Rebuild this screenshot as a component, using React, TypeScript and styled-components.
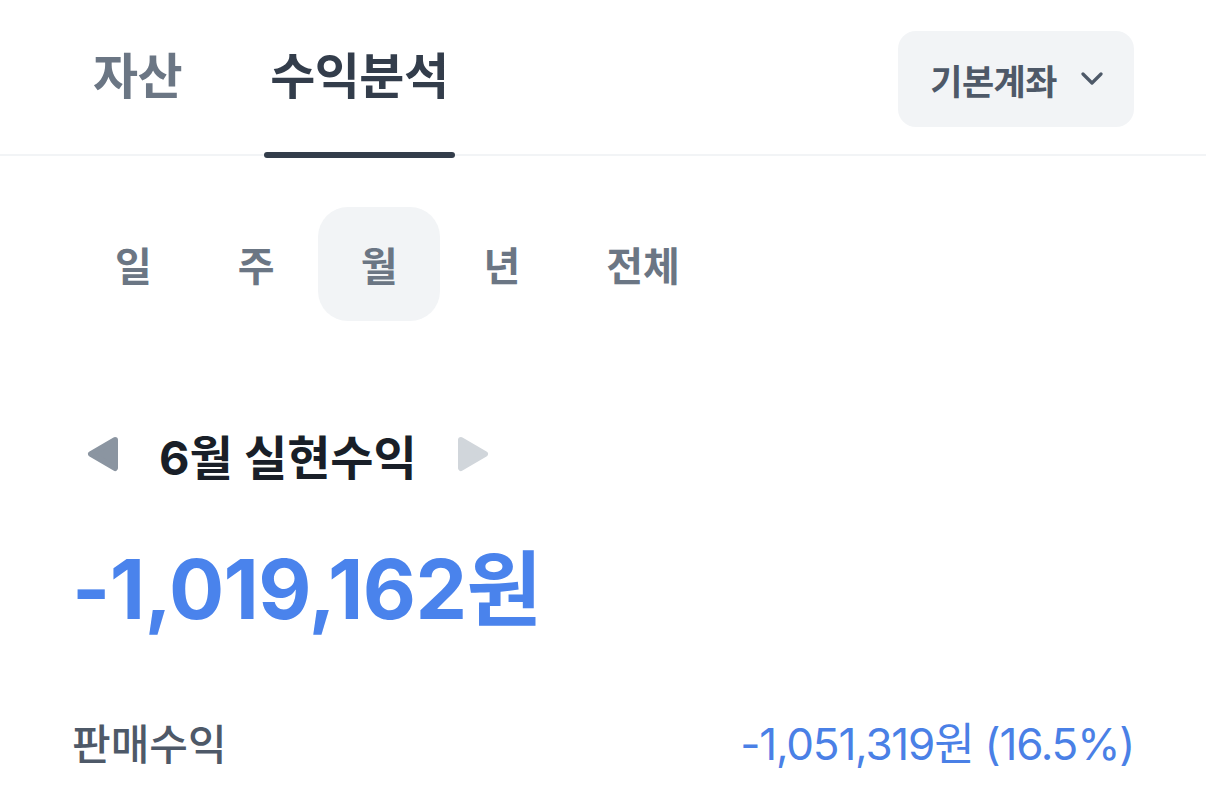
import React, { useState } from 'react';
import styled, { createGlobalStyle } from 'styled-components';

const GlobalStyle = createGlobalStyle`
    html, body {
        margin: 0;
        padding: 0;
        background: #ffffff;
    }

    body {
        font-family: Inter, 'Noto Sans CJK KR', 'Noto Sans', sans-serif;
        -webkit-font-smoothing: antialiased;
    }
`;

const Page = styled.div`
    width: 1206px;
    height: 810px;
    overflow: hidden;
    background: #ffffff;
`;

const Header = styled.header`
    display: flex;
    align-items: center;
    justify-content: space-between;
    height: 156px;
    padding: 0 72px 0 87px;
    box-sizing: border-box;
    border-bottom: 2px solid #f2f4f6;
`;

const TabList = styled.nav`
    display: flex;
    align-self: stretch;
    gap: 76px;
`;

const Tab = styled.button<{ $active?: boolean }>`
    position: relative;
    display: flex;
    align-items: center;
    padding: 0 6px 10px;
    border: 0;
    background: none;
    font-family: inherit;
    font-size: 49px;
    font-weight: 700;
    letter-spacing: -0.5px;
    color: ${({ $active }) => ($active ? '#333d4b' : '#6b7684')};
    cursor: pointer;

    &::after {
        content: '';
        display: ${({ $active }) => ($active ? 'block' : 'none')};
        position: absolute;
        left: 0;
        right: 0;
        bottom: -4px;
        height: 6px;
        border-radius: 3px;
        background: #333d4b;
    }
`;

const AccountButton = styled.button`
    display: flex;
    align-items: center;
    gap: 24px;
    height: 96px;
    padding: 0 31px 0 32px;
    border: 0;
    border-radius: 18px;
    background: #f2f4f6;
    font-family: inherit;
    font-size: 35px;
    font-weight: 700;
    letter-spacing: -0.5px;
    color: #4e5968;
    margin-top: 4px;
`;

const Body = styled.main`
    padding: 51px 72px 0;
`;

const PeriodRow = styled.div`
    display: flex;
`;

const PeriodItem = styled.button<{ $active?: boolean }>`
    height: 114px;
    padding: 0 43px;
    border: 0;
    border-radius: 30px;
    background: ${({ $active }) => ($active ? '#f2f4f6' : 'transparent')};
    font-family: inherit;
    font-size: 40px;
    font-weight: 600;
    color: #6b7684;
    cursor: pointer;
`;

const TitleRow = styled.div`
    display: flex;
    align-items: center;
    gap: 40px;
    margin: 100px 0 0 14px;
    height: 66px;
`;

const Title = styled.h2`
    margin: 0;
    font-size: 47px;
    font-weight: 700;
    letter-spacing: 0;
    color: #191f28;
`;

const Amount = styled.div`
    margin-top: 62px;
    font-size: 82px;
    font-weight: 700;
    letter-spacing: -0.6px;
    line-height: 1;
    color: #4a83ec;
`;

const SummaryRow = styled.div`
    display: flex;
    align-items: center;
    justify-content: space-between;
    margin-top: 78px;
`;

const SummaryLabel = styled.span`
    font-size: 42px;
    font-weight: 500;
    color: #4e5968;
`;

const SummaryValue = styled.span`
    font-size: 44px;
    font-weight: 400;
    letter-spacing: -1.2px;
    color: #4a80e6;
`;

const Arrow = ({ dir, color }: { dir: 'left' | 'right'; color: string }) => (
    <svg width="33" height="36" viewBox="0 0 33 36">
        <path
            d={dir === 'left' ? 'M29 4 L5 18 L29 32 Z' : 'M4 4 L28 18 L4 32 Z'}
            fill={color}
            stroke={color}
            strokeWidth="6"
            strokeLinejoin="round"
        />
    </svg>
);

const Chevron = () => (
    <svg width="22" height="14" viewBox="0 0 22 14">
        <path d="M2 2 L11 11 L20 2" fill="none" stroke="#4e5968" strokeWidth="3.2" strokeLinecap="round" strokeLinejoin="round" />
    </svg>
);

const periods = ['일', '주', '월', '년', '전체'];

export default function App() {
    const [period, setPeriod] = useState('월');

    return (
        <Page>
            <GlobalStyle />
            <Header>
                <TabList>
                    <Tab>자산</Tab>
                    <Tab $active>수익분석</Tab>
                </TabList>
                <AccountButton>
                    기본계좌
                    <Chevron />
                </AccountButton>
            </Header>
            <Body>
                <PeriodRow>
                    {periods.map((p) => (
                        <PeriodItem key={p} $active={p === period} onClick={() => setPeriod(p)}>
                            {p}
                        </PeriodItem>
                    ))}
                </PeriodRow>
                <TitleRow>
                    <Arrow dir="left" color="#8b95a1" />
                    <Title>6월 실현수익</Title>
                    <Arrow dir="right" color="#d1d6db" />
                </TitleRow>
                <Amount>-1,019,162원</Amount>
                <SummaryRow>
                    <SummaryLabel>판매수익</SummaryLabel>
                    <SummaryValue>-1,051,319원 (16.5%)</SummaryValue>
                </SummaryRow>
            </Body>
        </Page>
    );
}
